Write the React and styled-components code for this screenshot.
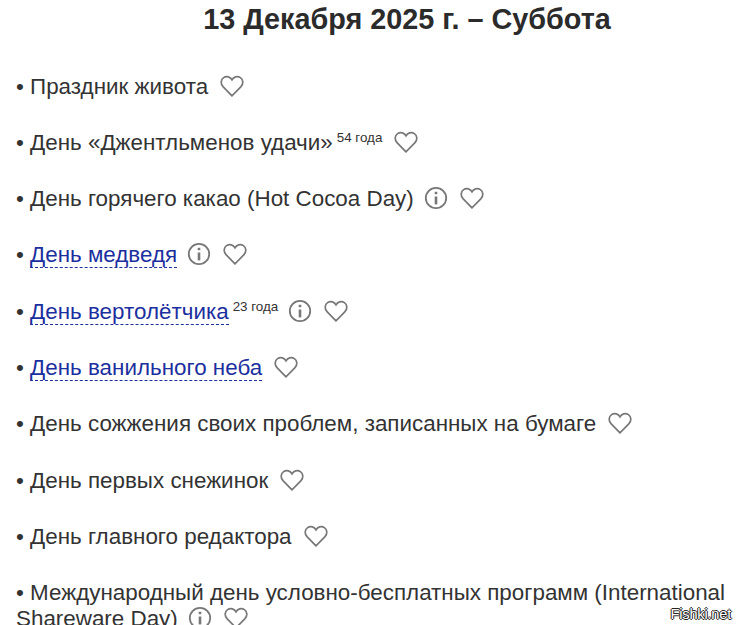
import styled, { createGlobalStyle } from "styled-components";

const GlobalStyle = createGlobalStyle`
  html, body {
    margin: 0;
    padding: 0;
    background: #fff;
    height: 100%;
    overflow: hidden;
  }
`;

const Page = styled.div`
  position: relative;
  width: 736px;
  height: 625px;
  overflow: hidden;
  font-family: "Liberation Sans", Arial, sans-serif;
  color: #333;
`;

const Title = styled.h1`
  margin: 0;
  padding: 2px 0 0 78px;
  font-size: 28.8px;
  line-height: 34px;
  font-weight: bold;
  text-align: center;
  color: #2b2b2b;
`;

const List = styled.div`
  padding: 37.5px 8px 0 16px;
`;

const Row = styled.div`
  font-size: 22.4px;
  line-height: 26.3px;
  margin-bottom: 30px;
`;

const Holiday = styled.a`
  color: #1c2f9e;
  text-decoration: none;
  border-bottom: 1px dashed #1c2f9e;
`;

const Age = styled.sup`
  font-size: 13.4px;
  line-height: 0;
  vertical-align: 8px;
  margin-left: 4px;
  color: #333;
`;

const IconWrap = styled.svg`
  display: inline-block;
  width: 24px;
  height: 24px;
  margin: -6px 0 -6px ${(p) => p.$gap}px;
  vertical-align: 2px;
  fill: none;
  stroke: #777;
`;

const Watermark = styled.div`
  position: absolute;
  right: 5px;
  bottom: 3px;
  font-size: 14.6px;
  line-height: 16px;
  letter-spacing: -0.2px;
  color: #fff;
  text-shadow: -1px 0 #222, 1px 0 #222, 0 -1px #222, 0 1px #222;
`;

function Heart() {
  return (
    <IconWrap viewBox="0 0 24 24" $gap={12} strokeWidth="1.7">
      <path d="M12 21.8 L3.2 12.9 C0.3 10 0.6 5.6 3.6 3.6 C6.8 1.6 10.4 2.9 12 5.8 C13.6 2.9 17.2 1.6 20.4 3.6 C23.4 5.6 23.7 10 20.8 12.9 Z" />
    </IconWrap>
  );
}

function Info() {
  return (
    <IconWrap viewBox="0 0 24 24" $gap={10} strokeWidth="1.8">
      <circle cx="12" cy="12" r="10.2" />
      <path d="M12 10.5V18.4" strokeWidth="2.6" />
      <path d="M12 5.8V8.2" strokeWidth="2.6" />
    </IconWrap>
  );
}

const rows = [
  { text: "Праздник живота" },
  { text: "День «Джентльменов удачи»", age: "54 года" },
  { text: "День горячего какао (Hot Cocoa Day)", info: true },
  { text: "День медведя", link: true, info: true },
  { text: "День вертолётчика", link: true, age: "23 года", info: true },
  { text: "День ванильного неба", link: true },
  { text: "День сожжения своих проблем, записанных на бумаге" },
  { text: "День первых снежинок" },
  { text: "День главного редактора" },
  { text: "Международный день условно-бесплатных программ (International Shareware Day)", info: true },
];

export default function App() {
  return (
    <Page>
      <GlobalStyle />
      <Title>13 Декабря 2025 г. – Суббота</Title>
      <List>
        {rows.map((r) => (
          <Row key={r.text}>
            •{" "}
            {r.link ? <Holiday href="#">{r.text}</Holiday> : r.text}
            {r.age && <Age>{r.age}</Age>}
            {r.info && <Info />}
            <Heart />
          </Row>
        ))}
      </List>
      <Watermark>Fishki.net</Watermark>
    </Page>
  );
}
